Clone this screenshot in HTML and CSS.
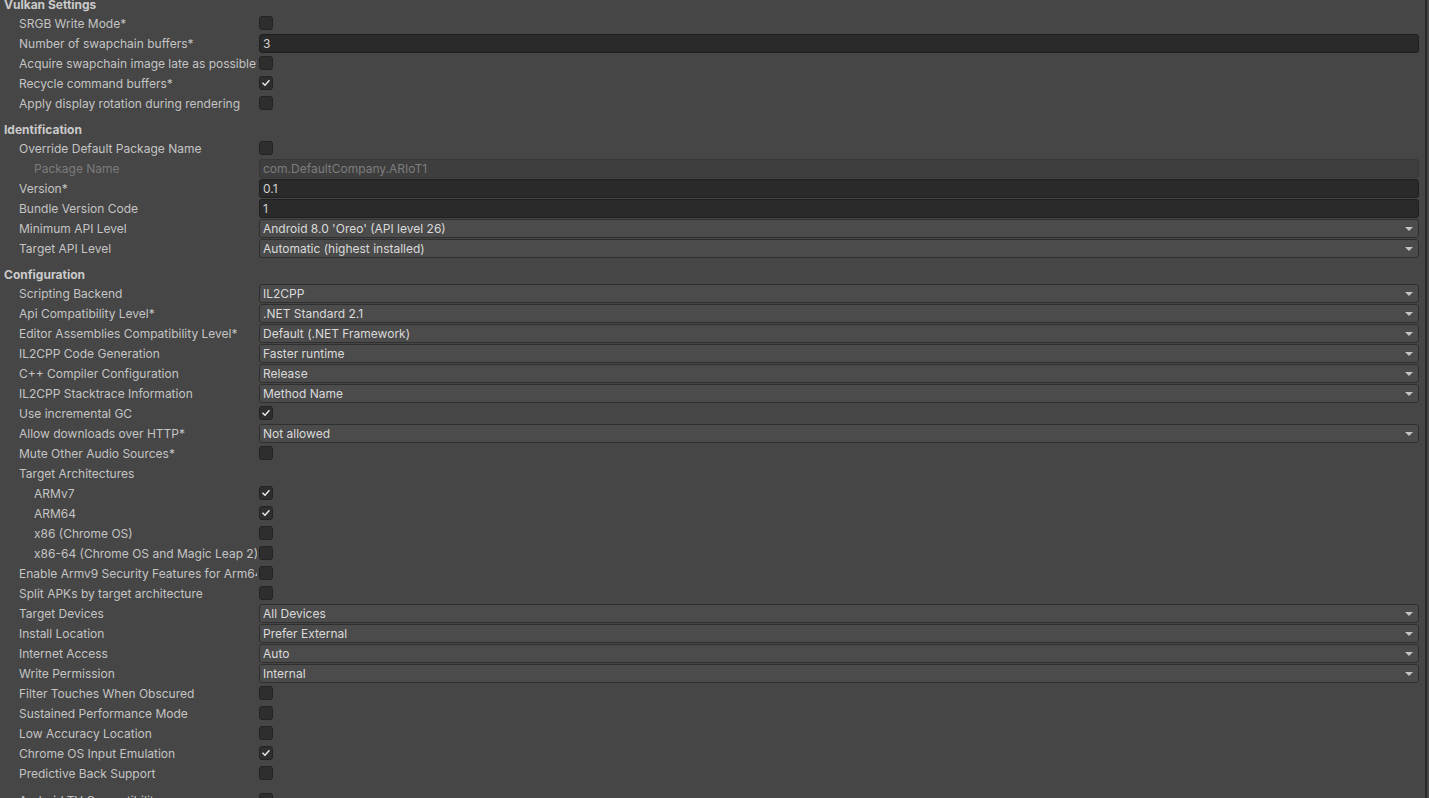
FILE: index.html
```html
<!DOCTYPE html>
<html>

<head>
    <title>Player Settings - Android</title>
    <link rel="stylesheet" href="styles.css">
</head>

<body>
    <div class="panel">
        <div class="inspector">

            <!-- Vulkan -->
            <div class="section-title first">Vulkan Settings</div>
            <div class="row">
                <div class="label">SRGB Write Mode*</div>
                <div class="value"><span class="toggle"></span></div>
            </div>
            <div class="row">
                <div class="label">Number of swapchain buffers*</div>
                <div class="value"><div class="text-field">3</div></div>
            </div>
            <div class="row">
                <div class="label">Acquire swapchain image late as possible*</div>
                <div class="value"><span class="toggle"></span></div>
            </div>
            <div class="row">
                <div class="label">Recycle command buffers*</div>
                <div class="value"><span class="toggle checked"><svg viewBox="0 0 14 14"><path d="M3.5 7.3 L5.8 9.5 L10.5 4.3" /></svg></span></div>
            </div>
            <div class="row">
                <div class="label">Apply display rotation during rendering</div>
                <div class="value"><span class="toggle"></span></div>
            </div>

            <!-- Identification -->
            <div class="section-title">Identification</div>
            <div class="row">
                <div class="label">Override Default Package Name</div>
                <div class="value"><span class="toggle"></span></div>
            </div>
            <div class="row disabled">
                <div class="label indent">Package Name</div>
                <div class="value"><div class="text-field">com.DefaultCompany.ARIoT1</div></div>
            </div>
            <div class="row">
                <div class="label">Version*</div>
                <div class="value"><div class="text-field">0.1</div></div>
            </div>
            <div class="row">
                <div class="label">Bundle Version Code</div>
                <div class="value"><div class="text-field">1</div></div>
            </div>
            <div class="row">
                <div class="label">Minimum API Level</div>
                <div class="value"><div class="dropdown">Android 8.0 'Oreo' (API level 26)</div></div>
            </div>
            <div class="row">
                <div class="label">Target API Level</div>
                <div class="value"><div class="dropdown">Automatic (highest installed)</div></div>
            </div>

            <!-- Configuration -->
            <div class="section-title">Configuration</div>
            <div class="row">
                <div class="label">Scripting Backend</div>
                <div class="value"><div class="dropdown">IL2CPP</div></div>
            </div>
            <div class="row">
                <div class="label">Api Compatibility Level*</div>
                <div class="value"><div class="dropdown">.NET Standard 2.1</div></div>
            </div>
            <div class="row">
                <div class="label">Editor Assemblies Compatibility Level*</div>
                <div class="value"><div class="dropdown">Default (.NET Framework)</div></div>
            </div>
            <div class="row">
                <div class="label">IL2CPP Code Generation</div>
                <div class="value"><div class="dropdown">Faster runtime</div></div>
            </div>
            <div class="row">
                <div class="label">C++ Compiler Configuration</div>
                <div class="value"><div class="dropdown">Release</div></div>
            </div>
            <div class="row">
                <div class="label">IL2CPP Stacktrace Information</div>
                <div class="value"><div class="dropdown">Method Name</div></div>
            </div>
            <div class="row">
                <div class="label">Use incremental GC</div>
                <div class="value"><span class="toggle checked"><svg viewBox="0 0 14 14"><path d="M3.5 7.3 L5.8 9.5 L10.5 4.3" /></svg></span></div>
            </div>
            <div class="row">
                <div class="label">Allow downloads over HTTP*</div>
                <div class="value"><div class="dropdown">Not allowed</div></div>
            </div>
            <div class="row">
                <div class="label">Mute Other Audio Sources*</div>
                <div class="value"><span class="toggle"></span></div>
            </div>
            <div class="row">
                <div class="label">Target Architectures</div>
                <div class="value"></div>
            </div>
            <div class="row">
                <div class="label indent">ARMv7</div>
                <div class="value"><span class="toggle checked"><svg viewBox="0 0 14 14"><path d="M3.5 7.3 L5.8 9.5 L10.5 4.3" /></svg></span></div>
            </div>
            <div class="row">
                <div class="label indent">ARM64</div>
                <div class="value"><span class="toggle checked"><svg viewBox="0 0 14 14"><path d="M3.5 7.3 L5.8 9.5 L10.5 4.3" /></svg></span></div>
            </div>
            <div class="row">
                <div class="label indent">x86 (Chrome OS)</div>
                <div class="value"><span class="toggle"></span></div>
            </div>
            <div class="row">
                <div class="label indent">x86-64 (Chrome OS and Magic Leap 2)</div>
                <div class="value"><span class="toggle"></span></div>
            </div>
            <div class="row">
                <div class="label">Enable Armv9 Security Features for Arm64</div>
                <div class="value"><span class="toggle"></span></div>
            </div>
            <div class="row">
                <div class="label">Split APKs by target architecture</div>
                <div class="value"><span class="toggle"></span></div>
            </div>
            <div class="row">
                <div class="label">Target Devices</div>
                <div class="value"><div class="dropdown">All Devices</div></div>
            </div>
            <div class="row">
                <div class="label">Install Location</div>
                <div class="value"><div class="dropdown">Prefer External</div></div>
            </div>
            <div class="row">
                <div class="label">Internet Access</div>
                <div class="value"><div class="dropdown">Auto</div></div>
            </div>
            <div class="row">
                <div class="label">Write Permission</div>
                <div class="value"><div class="dropdown">Internal</div></div>
            </div>
            <div class="row">
                <div class="label">Filter Touches When Obscured</div>
                <div class="value"><span class="toggle"></span></div>
            </div>
            <div class="row">
                <div class="label">Sustained Performance Mode</div>
                <div class="value"><span class="toggle"></span></div>
            </div>
            <div class="row">
                <div class="label">Low Accuracy Location</div>
                <div class="value"><span class="toggle"></span></div>
            </div>
            <div class="row">
                <div class="label">Chrome OS Input Emulation</div>
                <div class="value"><span class="toggle checked"><svg viewBox="0 0 14 14"><path d="M3.5 7.3 L5.8 9.5 L10.5 4.3" /></svg></span></div>
            </div>
            <div class="row">
                <div class="label">Predictive Back Support</div>
                <div class="value"><span class="toggle"></span></div>
            </div>

            <div class="row spaced">
                <div class="label">Android TV Compatibility</div>
                <div class="value"><span class="toggle"></span></div>
            </div>
        </div>
        <div class="edge"></div>
    </div>
</body>

</html>
```

FILE: styles.css
```css
body {
    background-color: #464646;
    font-family: "Inter", "Liberation Sans", Arial, sans-serif;
    font-size: 12px;
    color: #c4c4c4;
    margin: 0;
    padding: 0;
    height: 798px;
    overflow: hidden;
}

.panel {
    display: flex;
    height: 100%;
}

.inspector {
    flex: 1;
    padding: 0 6px 0 4px;
}

.edge {
    width: 2px;
    margin-right: 2px;
    background-color: #2b2b2b;
}

.section-title {
    height: 19px;
    line-height: 22px;
    margin-top: 6px;
    font-weight: bold;
    color: #cbcbcb;
}

.section-title.first {
    margin-top: -6px;
}

.row {
    display: grid;
    grid-template-columns: 253px 1fr;
    column-gap: 2px;
    height: 20px;
    align-items: center;
}

.row.spaced {
    margin-top: 7px;
}

.label {
    padding-left: 15px;
    white-space: nowrap;
    overflow: hidden;
    line-height: 22px;
    height: 20px;
}

.label.indent {
    padding-left: 30px;
}

.value {
    display: flex;
    align-items: center;
    height: 20px;
}

.toggle {
    width: 12px;
    height: 12px;
    border: 1px solid #232323;
    border-radius: 3px;
    background-color: #2e2e2e;
    display: flex;
}

.toggle svg {
    width: 12px;
    height: 12px;
}

.toggle path {
    fill: none;
    stroke: #eeeeee;
    stroke-width: 1.6;
    stroke-linecap: square;
}

.text-field,
.dropdown {
    flex: 1;
    align-self: flex-start;
    margin-top: 1px;
    height: 17px;
    line-height: 18px;
    border-radius: 3px;
    padding: 0 3px;
    white-space: nowrap;
    overflow: hidden;
}

.text-field {
    background-color: #2a2a2a;
    border: 1px solid #1f1f1f;
    color: #d2d2d2;
}

.disabled .label {
    color: #7b7b7b;
}

.disabled .text-field {
    background-color: #3e3e3e;
    border-color: #363636;
    color: #7d7d7d;
}

.dropdown {
    position: relative;
    background-color: #4b4b4b;
    border: 1px solid #2f2f2f;
    color: #dadada;
}

/* arrow on the right of every popup field */
.dropdown::after {
    content: "";
    position: absolute;
    right: 5px;
    top: 7px;
    border-left: 4px solid transparent;
    border-right: 4px solid transparent;
    border-top: 4px solid #c4c4c4;
}
```
